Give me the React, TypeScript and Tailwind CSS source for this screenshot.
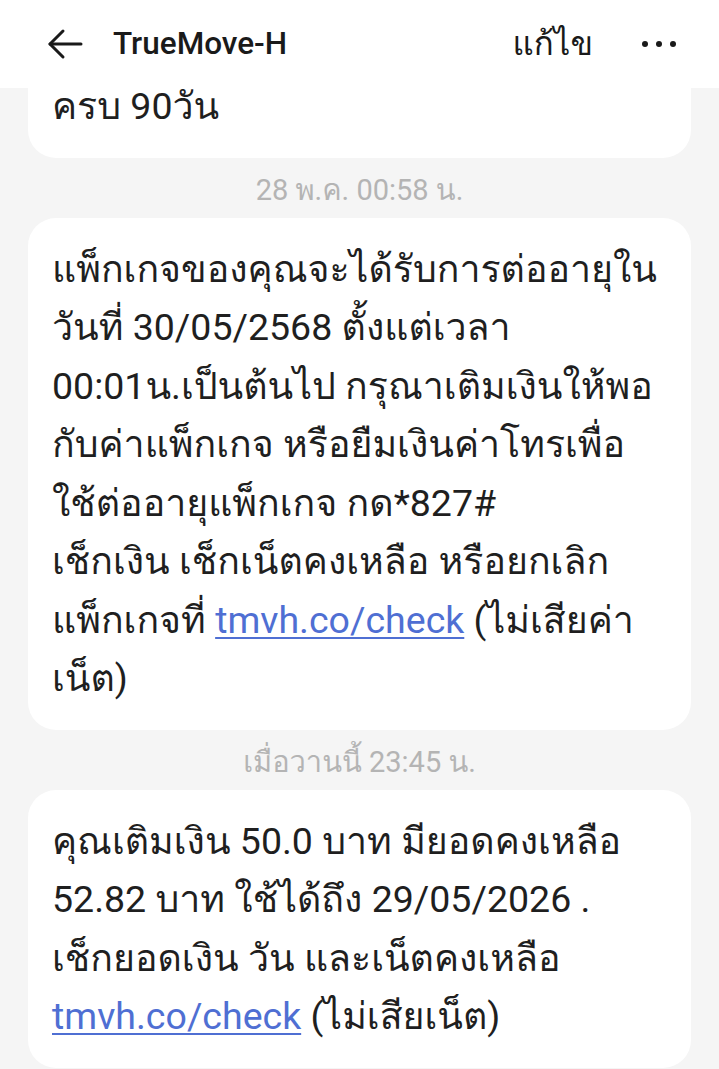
const BODY = "font-['Roboto','Loma',sans-serif]";

type Part = string | { link: string };

function Line({ parts }: { parts: Part[] }) {
  return (
    <span className="block whitespace-nowrap">
      {parts.map((p, i) =>
        typeof p === "string" ? (
          <span key={i}>{p}</span>
        ) : (
          <span key={i} className="text-[#4f6fd3] underline decoration-[2px] underline-offset-[4px]">
            {p.link}
          </span>
        ),
      )}
    </span>
  );
}

function Bubble({ lines }: { lines: Part[][] }) {
  return (
    <div className="mx-[28px] rounded-[28px] bg-white px-[24px] py-[22px] text-[37.5px] leading-[58.5px] text-[#1f1f1f]">
      {lines.map((l, i) => (
        <Line key={i} parts={l} />
      ))}
    </div>
  );
}

function Stamp({ children }: { children: string }) {
  return (
    <div className="flex h-[60px] items-center justify-center pt-[6px] text-[29px] text-[#b4b4b4]">
      {children}
    </div>
  );
}

const RENEW: Part[][] = [
  ["แพ็กเกจของคุณจะได้รับการต่ออายุใน"],
  ["วันที่ 30/05/2568 ตั้งแต่เวลา"],
  ["00:01น.เป็นต้นไป กรุณาเติมเงินให้พอ"],
  ["กับค่าแพ็กเกจ หรือยืมเงินค่าโทรเพื่อ"],
  ["ใช้ต่ออายุแพ็กเกจ กด*827#"],
  ["เช็กเงิน เช็กเน็ตคงเหลือ หรือยกเลิก"],
  ["แพ็กเกจที่ ", { link: "tmvh.co/check" }, " (ไม่เสียค่า"],
  ["เน็ต)"],
];

const TOPUP: Part[][] = [
  ["คุณเติมเงิน 50.0 บาท มียอดคงเหลือ"],
  ["52.82 บาท ใช้ได้ถึง 29/05/2026 ."],
  ["เช็กยอดเงิน วัน และเน็ตคงเหลือ"],
  [{ link: "tmvh.co/check" }, " (ไม่เสียเน็ต)"],
];

function BackArrow() {
  return (
    <svg width="36" height="32" viewBox="0 0 36 32" fill="none" stroke="#1a1a1a" strokeWidth="3" strokeLinecap="round" strokeLinejoin="round">
      <path d="M34 16H3" />
      <path d="M16 3L3 16l13 13" />
    </svg>
  );
}

export default function App() {
  return (
    <div className={`flex h-[1069px] w-[719px] flex-col overflow-hidden bg-[#f5f5f5] ${BODY}`}>
      <header className="relative z-10 flex h-[88px] shrink-0 items-center bg-white pl-[47px] pr-[43px]">
        <BackArrow />
        <h1 className="ml-[30px] font-['Roboto',sans-serif] text-[31.5px] font-medium text-[#1a1a1a]">TrueMove-H</h1>
        <span className="ml-auto text-[33px] text-[#1a1a1a]">แก้ไข</span>
        <span className="ml-[49px] flex items-center gap-[8px]">
          <span className="size-[6px] rounded-full bg-[#1a1a1a]" />
          <span className="size-[6px] rounded-full bg-[#1a1a1a]" />
          <span className="size-[6px] rounded-full bg-[#1a1a1a]" />
        </span>
      </header>

      <main className="-mt-[33px] flex flex-col">
        <Bubble lines={[["ครบ 90วัน"]]} />
        <Stamp>28 พ.ค. 00:58 น.</Stamp>
        <Bubble lines={RENEW} />
        <Stamp>เมื่อวานนี้ 23:45 น.</Stamp>
        <Bubble lines={TOPUP} />
      </main>
    </div>
  );
}
